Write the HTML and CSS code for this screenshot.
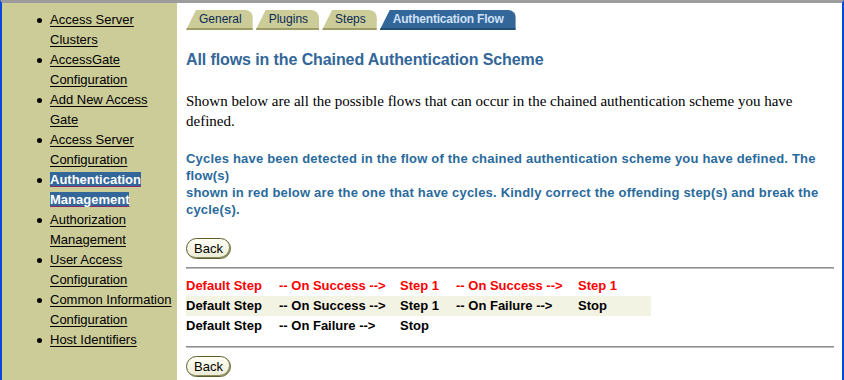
FILE: index.html
```html
<!DOCTYPE html>
<html>
<head>
<meta charset="utf-8">
<link rel="stylesheet" href="styles.css">
</head>
<body>
<div class="frame">
  <div class="sidebar">
    <ul class="nav">
      <li><a href="#">Access Server Clusters</a></li>
      <li><a href="#">AccessGate Configuration</a></li>
      <li><a href="#">Add New Access Gate</a></li>
      <li><a href="#">Access Server Configuration</a></li>
      <li><a href="#" class="current"><span>Authentication</span> <span>Management</span></a></li>
      <li><a href="#">Authorization Management</a></li>
      <li><a href="#">User Access Configuration</a></li>
      <li><a href="#">Common Information Configuration</a></li>
      <li><a href="#">Host Identifiers</a></li>
    </ul>
  </div>
  <div class="main">
    <div class="tabs">
      <div class="tab">General</div>
      <div class="tab">Plugins</div>
      <div class="tab">Steps</div>
      <div class="tab active">Authentication Flow</div>
    </div>
    <h1 class="title">All flows in the Chained Authentication Scheme</h1>
    <p class="intro">Shown below are all the possible flows that can occur in the chained authentication scheme you have defined.</p>
    <p class="warn">Cycles have been detected in the flow of the chained authentication scheme you have defined. The<br>flow(s)<br>shown in red below are the one that have cycles. Kindly correct the offending step(s) and break the cycle(s).</p>
    <div class="btnrow"><button class="btn">Back</button></div>
    <div class="rule"></div>
    <table class="flows">
      <tr class="cycle"><td class="c1">Default Step</td><td class="c2">-- On Success --&gt;</td><td class="c3">Step 1</td><td class="c4">-- On Success --&gt;</td><td class="c5">Step 1</td></tr>
      <tr class="alt"><td>Default Step</td><td>-- On Success --&gt;</td><td>Step 1</td><td>-- On Failure --&gt;</td><td>Stop</td></tr>
      <tr><td>Default Step</td><td>-- On Failure --&gt;</td><td>Stop</td><td></td><td></td></tr>
    </table>
    <div class="rule rule2"></div>
    <div class="btnrow btnrow2"><button class="btn">Back</button></div>
  </div>
</div>
</body>
</html>
```
FILE: styles.css
```css
html, body {
  margin: 0;
  padding: 0;
  height: 380px;
  overflow: hidden;
  background: #ffffff;
}
body {
  font-family: "Liberation Sans", Arial, sans-serif;
  font-size: 13px;
  color: #000;
}
.frame {
  display: flex;
  height: 380px;
  box-sizing: border-box;
  border-top: 3px solid #9c9c9c;
  border-left: 2px solid #0a46d8;
  border-right: 2px solid #0a46d8;
}
.sidebar {
  flex: none;
  width: 175px;
  background: #cccc99;
}
.nav {
  list-style: none;
  margin: 0;
  padding: 7px 0 0 35px;
}
.nav li {
  display: flex;
  line-height: 20px;
}
.nav li::before {
  content: "";
  flex: none;
  width: 5px;
  height: 5px;
  border-radius: 50%;
  background: #000;
  margin: 8px 8px 0 0;
}
.nav a {
  width: 126px;
  color: #000;
  text-decoration: underline;
  text-underline-offset: 2px;
}
.nav a.current {
  color: #fff;
  font-weight: bold;
  text-decoration-color: #8a2a6a;
}
.nav a.current span {
  background: #336699;
}
.main {
  flex: 1;
  padding: 7px 8px 0 9px;
}
.tabs {
  display: flex;
  gap: 3px;
  font-size: 12px;
}
.tab {
  height: 18px;
  line-height: 19px;
  padding: 0 11px 0 13px;
  background: #cccc99;
  color: #0b2a55;
  border-bottom: 2px solid #9c9c66;
  border-top-right-radius: 8px;
  clip-path: polygon(10px 0, 100% 0, 100% 100%, 0 100%);
}
.tab.active {
  padding: 0 12px 0 13px;
  background: #336699;
  color: #cfe2f7;
  font-weight: bold;
  letter-spacing: -0.2px;
  border-bottom-color: #244c78;
}
.title {
  margin: 20px 0 0 0;
  font-size: 16px;
  line-height: 20px;
  font-weight: bold;
  color: #336699;
  letter-spacing: -0.1px;
}
.intro {
  margin: 21px 0 0 0;
  font-family: "Liberation Serif", "Times New Roman", serif;
  font-size: 15px;
  line-height: 20px;
  width: 620px;
}
.warn {
  margin: 19px 0 0 0;
  color: #2a6a9c;
  font-weight: bold;
  font-size: 13px;
  line-height: 17px;
  letter-spacing: 0.2px;
  width: 640px;
}
.btnrow {
  margin-top: 20px;
  height: 21px;
}
.btn {
  box-sizing: border-box;
  width: 45px;
  height: 21px;
  padding: 0;
  border: 1px solid #5c5c2e;
  border-radius: 11px;
  background: linear-gradient(#fffff4, #ecebd6);
  box-shadow: inset -1px -1px 0 #8c8c5a;
  font-family: "Liberation Sans", Arial, sans-serif;
  font-size: 13px;
  color: #000;
}
.rule {
  margin-top: 8px;
  border-top: 1px solid #8e8e8e;
  border-bottom: 1px solid #bdbdbd;
}
.rule2 {
  margin-top: 10px;
}
.flows {
  margin-top: 7px;
  border-collapse: collapse;
  font-weight: bold;
  font-size: 13px;
}
.flows td {
  padding: 0;
  height: 20px;
  line-height: 20px;
  white-space: nowrap;
}
.flows .c1 { width: 93px; }
.flows .c2 { width: 121px; }
.flows .c3 { width: 56px; }
.flows .c4 { width: 122px; }
.flows .c5 { width: 73px; }
.flows .cycle { color: #ff0000; }
.flows .alt { background: #f3f3e4; }
.btnrow2 { margin-top: 8px; }
```
